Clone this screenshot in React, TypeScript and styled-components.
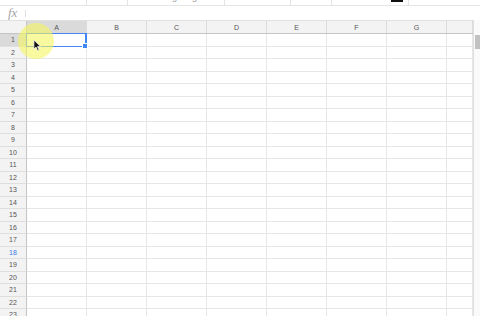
import React from "react";
import styled, { createGlobalStyle } from "styled-components";

const COLS = ["A", "B", "C", "D", "E", "F", "G"];
const ROW_COUNT = 24;

const GlobalStyle = createGlobalStyle`
  html, body {
    margin: 0;
    padding: 0;
    background: #fff;
  }
  body {
    font-family: "Liberation Sans", Arial, sans-serif;
  }
`;

const App: React.FC = () => {
  const rows = Array.from({ length: ROW_COUNT }, (_, i) => i + 1);

  return (
    <Screen>
      <GlobalStyle />
      <TopStrip>
        <StripSeg $w={87} />
        <StripSeg $w={41} />
        <StripSeg $w={97}>
          <Descender $left={44}>g</Descender>
          <Descender $left={64}>g</Descender>
        </StripSeg>
        <StripSeg $w={66} />
        <StripSeg $w={41} />
        <StripSeg $w={77}>
          <BlackMark />
        </StripSeg>
        <StripSeg $w={71} $last />
      </TopStrip>

      <FormulaBar>
        <Fx>fx</Fx>
        <FxDivider />
      </FormulaBar>

      <SheetArea>
        <Grid>
          <HeaderRow>
            <Corner />
            {COLS.map((c) => (
              <ColHeader key={c} $selected={c === "A"}>
                {c}
              </ColHeader>
            ))}
            <ColHeader $rest />
          </HeaderRow>
          {rows.map((r) => (
            <Row key={r}>
              <RowHeader $selected={r === 1} $hover={r === 18}>
                {r}
              </RowHeader>
              {COLS.map((c) => (
                <Cell key={c}>
                  {r === 1 && c === "A" && (
                    <Selection>
                      <Handle />
                    </Selection>
                  )}
                </Cell>
              ))}
              <Cell $rest />
            </Row>
          ))}
        </Grid>
        <Scrollbar>
          <Thumb />
        </Scrollbar>
      </SheetArea>

      <ClickHalo />
      <Pointer viewBox="0 0 10 14" width="9" height="13">
        <path
          d="M1 1 L1 11 L3.4 8.8 L5.2 12.8 L6.8 12.1 L5 8.2 L8.4 8.2 Z"
          fill="#111"
          stroke="#fff"
          strokeWidth="0.8"
          strokeLinejoin="round"
        />
      </Pointer>
    </Screen>
  );
};

const Screen = styled.div`
  position: relative;
  width: 480px;
  height: 316px;
  overflow: hidden;
  display: flex;
  flex-direction: column;
  background: #fff;
`;

const TopStrip = styled.div`
  height: 6px;
  display: flex;
  border-bottom: 1px solid #e6e6e6;
  box-sizing: border-box;
  flex-shrink: 0;
`;

const StripSeg = styled.div<{ $w: number; $last?: boolean }>`
  position: relative;
  width: ${(p) => p.$w}px;
  border-right: ${(p) => (p.$last ? "none" : "1px solid #e4e4e4")};
  box-sizing: border-box;
  overflow: hidden;
`;

const Descender = styled.span<{ $left: number }>`
  position: absolute;
  left: ${(p) => p.$left}px;
  top: -8px;
  font-size: 9px;
  color: #999;
`;

const BlackMark = styled.div`
  position: absolute;
  left: 59px;
  top: 0;
  width: 12px;
  height: 2px;
  background: #111;
`;

const FormulaBar = styled.div`
  height: 14px;
  display: flex;
  align-items: center;
  padding-left: 8px;
  flex-shrink: 0;
`;

const Fx = styled.span`
  font-family: "Liberation Serif", "Times New Roman", serif;
  font-style: italic;
  font-size: 13px;
  line-height: 14px;
  color: #a6a6a6;
  width: 17px;
`;

const FxDivider = styled.div`
  width: 1px;
  height: 7px;
  background: #e0e0e0;
`;

const SheetArea = styled.div`
  flex: 1;
  display: flex;
  min-height: 0;
`;

const Grid = styled.div`
  width: 473px;
  display: flex;
  flex-direction: column;
  overflow: hidden;
`;

const HeaderRow = styled.div`
  height: 14px;
  display: flex;
  background: #f3f3f3;
  border-top: 1px solid #e0e0e0;
  border-bottom: 1px solid #c4c4c4;
  box-sizing: border-box;
  flex-shrink: 0;
`;

const Corner = styled.div`
  width: 27px;
  border-right: 1px solid #c4c4c4;
  box-sizing: border-box;
  flex-shrink: 0;
`;

const ColHeader = styled.div<{ $selected?: boolean; $rest?: boolean }>`
  width: ${(p) => (p.$rest ? "26px" : "60px")};
  flex-shrink: 0;
  display: flex;
  align-items: center;
  justify-content: center;
  font-size: 7px;
  color: #555;
  background: ${(p) => (p.$selected ? "#dadada" : "transparent")};
  border-right: 1px solid #dcdcdc;
  box-sizing: border-box;
`;

const Row = styled.div`
  height: 12.5px;
  display: flex;
  flex-shrink: 0;
`;

const RowHeader = styled.div<{ $selected?: boolean; $hover?: boolean }>`
  width: 27px;
  flex-shrink: 0;
  display: flex;
  align-items: center;
  justify-content: center;
  font-size: 7px;
  color: ${(p) => (p.$hover ? "#3b78e7" : "#555")};
  background: ${(p) => (p.$selected ? "#dadada" : "#f3f3f3")};
  border-right: 1px solid #c4c4c4;
  border-bottom: 1px solid #dedede;
  box-sizing: border-box;
`;

const Cell = styled.div<{ $rest?: boolean }>`
  position: relative;
  width: ${(p) => (p.$rest ? "26px" : "60px")};
  flex-shrink: 0;
  border-right: 1px solid #e6e6e6;
  border-bottom: 1px solid #e6e6e6;
  box-sizing: border-box;
`;

const Selection = styled.div`
  position: absolute;
  left: -1px;
  top: -1px;
  right: -1px;
  bottom: -1px;
  border: 1px solid #4285f4;
  border-right-width: 2px;
  z-index: 2;
`;

const Handle = styled.div`
  position: absolute;
  right: -3px;
  bottom: -3px;
  width: 4px;
  height: 4px;
  background: #4285f4;
  border: 1px solid #fff;
`;

const Scrollbar = styled.div`
  flex: 1;
  position: relative;
  border-left: 1px solid #e0e0e0;
  background: #fafafa;
`;

const Thumb = styled.div`
  position: absolute;
  top: 15px;
  left: 1px;
  width: 5px;
  height: 14px;
  background: #c2c2c2;
`;

const ClickHalo = styled.div`
  position: absolute;
  left: 18px;
  top: 23px;
  width: 36px;
  height: 36px;
  border-radius: 50%;
  background: rgba(245, 245, 95, 0.6);
  pointer-events: none;
  z-index: 5;
`;

const Pointer = styled.svg`
  position: absolute;
  left: 33px;
  top: 39px;
  z-index: 6;
`;

export default App;
